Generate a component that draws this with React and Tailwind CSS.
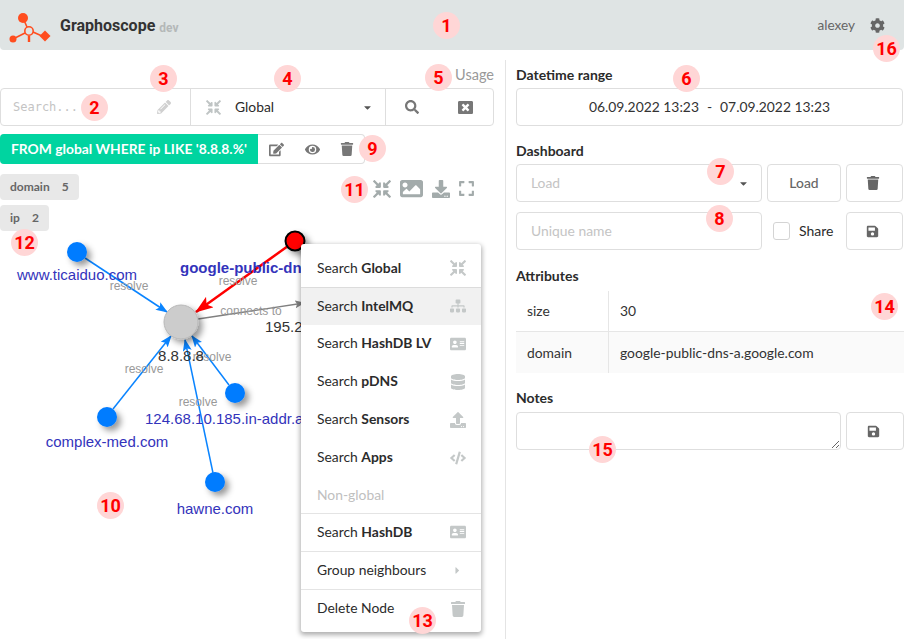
import React from "react";
import {
  FaAddressCard,
  FaCaretDown,
  FaCaretRight,
  FaCode,
  FaCog,
  FaCompressArrowsAlt,
  FaDatabase,
  FaDownload,
  FaEdit,
  FaExpand,
  FaEye,
  FaImage,
  FaPencilAlt,
  FaSave,
  FaSearch,
  FaSitemap,
  FaTrash,
  FaUpload,
  FaWindowClose,
} from "react-icons/fa";

const markers = [
  ["1", "left-[433px] top-[12px]"],
  ["2", "left-[81px] top-[94px]"],
  ["3", "left-[150px] top-[65px]"],
  ["4", "left-[274px] top-[65px]"],
  ["5", "left-[425px] top-[64px]"],
  ["6", "left-[673px] top-[65px]"],
  ["7", "left-[707px] top-[158px]"],
  ["8", "left-[706px] top-[205px]"],
  ["9", "left-[359px] top-[135px]"],
  ["10", "left-[97px] top-[492px]"],
  ["11", "left-[341px] top-[176px]"],
  ["12", "left-[11px] top-[229px]"],
  ["13", "left-[409px] top-[607px]"],
  ["14", "left-[871px] top-[293px]"],
  ["15", "left-[589px] top-[436px]"],
  ["16", "left-[873px] top-[35px]"],
];

const Marker = ({ label, pos }) => (
  <div
    className={`absolute ${pos} flex h-[27px] w-[27px] items-center justify-center rounded-full bg-[#ffd6d6] font-['Roboto',sans-serif] text-[18px] font-bold text-[#f00]`}
  >
    {label}
  </div>
);

const Logo = () => (
  <svg width="52" height="42" viewBox="0 0 52 42" className="shrink-0">
    <g stroke="#ff4d1f" fill="none">
      <path d="M23 14 L27 23 M13 35 L25 29 M33 28 L42 32" strokeWidth="1.6" />
      <path d="M29 32 L29 38" strokeWidth="2.4" />
      <circle cx="29" cy="27" r="4.2" strokeWidth="1.6" />
    </g>
    <circle cx="23" cy="14" r="5" fill="#ff4d1f" />
    <circle cx="13" cy="35" r="3.5" fill="#ff4d1f" />
    <path d="M45 26.5 L50.5 32 L45 37.5 L39.5 32 Z" fill="#ff4d1f" />
  </svg>
);

const Graph = () => (
  <svg width="505" height="503" viewBox="0 134 505 503" className="absolute left-0 top-0">
    <defs>
      <filter id="nodeShadow" x="-50%" y="-50%" width="220%" height="220%">
        <feDropShadow dx="4" dy="4" stdDeviation="3" floodColor="#000" floodOpacity="0.4" />
      </filter>
      <marker id="arrowBlue" viewBox="0 0 12 9" refX="11" refY="4.5" markerWidth="12" markerHeight="9" markerUnits="userSpaceOnUse" orient="auto">
        <path d="M0 0 L12 4.5 L0 9 L2.5 4.5 Z" fill="#0a84ff" />
      </marker>
      <marker id="arrowRed" viewBox="0 0 18 13" refX="17" refY="6.5" markerWidth="18" markerHeight="13" markerUnits="userSpaceOnUse" orient="auto">
        <path d="M0 0 L18 6.5 L0 13 L4 6.5 Z" fill="#f00" />
      </marker>
      <marker id="arrowGray" viewBox="0 0 10 8" refX="9" refY="4" markerWidth="10" markerHeight="8" markerUnits="userSpaceOnUse" orient="auto">
        <path d="M0 0 L10 4 L0 8 L2 4 Z" fill="#808080" />
      </marker>
    </defs>

    <g stroke="#0a84ff" strokeWidth="1.5" fill="none">
      <line x1="85" y1="258" x2="167" y2="312" markerEnd="url(#arrowBlue)" />
      <line x1="113" y1="409" x2="171" y2="336" markerEnd="url(#arrowBlue)" />
      <line x1="229" y1="385" x2="192" y2="336" markerEnd="url(#arrowBlue)" />
      <line x1="213" y1="473" x2="185" y2="340" markerEnd="url(#arrowBlue)" />
    </g>
    <line x1="288" y1="246" x2="196" y2="312" stroke="#f00" strokeWidth="2.5" markerEnd="url(#arrowRed)" />
    <line x1="198" y1="319" x2="304" y2="303" stroke="#808080" strokeWidth="1.3" markerEnd="url(#arrowGray)" />

    <g filter="url(#nodeShadow)">
      <circle cx="181" cy="322" r="17" fill="#ccc" stroke="#b8b8b8" />
      <circle cx="77" cy="252" r="10" fill="#007bff" />
      <circle cx="235" cy="393" r="10" fill="#007bff" />
      <circle cx="107" cy="417" r="10" fill="#007bff" />
      <circle cx="215" cy="482" r="10" fill="#007bff" />
      <circle cx="295" cy="241" r="9.5" fill="#f00" stroke="#000" strokeWidth="2" />
    </g>

    <g className="font-['Liberation_Sans',sans-serif]">
      <g fill="#999" fontSize="12" textAnchor="middle">
        <text x="129" y="290">resolve</text>
        <text x="238" y="285">resolve</text>
        <text x="144" y="373">resolve</text>
        <text x="212" y="361">resolve</text>
        <text x="198" y="406">resolve</text>
        <text x="251" y="315">connects to</text>
      </g>
      <g fill="#3333bb" fontSize="15" textAnchor="middle">
        <text x="77" y="280">www.ticaiduo.com</text>
        <text x="107" y="447">complex-med.com</text>
        <text x="215" y="514">hawne.com</text>
        <text x="145" y="424" textAnchor="start">124.68.10.185.in-addr.arpa</text>
        <text x="180" y="273" textAnchor="start" fontWeight="700">google-public-dns-a.google.com</text>
      </g>
      <g fill="#333" fontSize="15">
        <text x="181" y="361" textAnchor="middle">8.8.8.8</text>
        <text x="265" y="332">195.22.26.248</text>
      </g>
    </g>
  </svg>
);

const menuRows = [
  { pre: "Search ", bold: "Global", icon: FaCompressArrowsAlt, cls: "h-[44px] pt-[5px] border-b border-[#dcdcdc]" },
  { pre: "Search ", bold: "IntelMQ", icon: FaSitemap, cls: "h-[37px] pb-[1px] bg-[#f1f1f1]" },
  { pre: "Search ", bold: "HashDB LV", icon: FaAddressCard, cls: "h-[38px] pb-[1px]" },
  { pre: "Search ", bold: "pDNS", icon: FaDatabase, cls: "h-[38px] pb-[1px]" },
  { pre: "Search ", bold: "Sensors", icon: FaUpload, cls: "h-[38px] pb-[1px]" },
  { pre: "Search ", bold: "Apps", icon: FaCode, cls: "h-[38px] pb-[1px]" },
  { pre: "Non-global", disabled: true, cls: "h-[37px] border-b border-[#e4e4e4]" },
  { pre: "Search ", bold: "HashDB", icon: FaAddressCard, cls: "h-[38px] pb-[1px] border-b border-[#e4e4e4]" },
  { pre: "Group neighbours", icon: FaCaretRight, small: true, cls: "h-[38px] pb-[1px] border-b border-[#e4e4e4]" },
  { pre: "Delete Node", icon: FaTrash, cls: "h-[42px] pb-[5px]" },
];

const ContextMenu = () => (
  <div className="absolute left-[301px] top-[110px] w-[180px] rounded-[3px] bg-white shadow-[0_2px_5px_1px_rgba(0,0,0,0.32)]">
    {menuRows.map((row) => {
      const Icon = row.icon;
      return (
        <div key={row.pre + (row.bold || "")} className={`flex items-center justify-between pl-[16px] pr-[15px] ${row.cls}`}>
          <span className={row.disabled ? "text-[#c0c0c0]" : "text-[#2b2b2b]"}>
            {row.pre}
            {row.bold && <b className="font-bold">{row.bold}</b>}
          </span>
          {Icon && (
            <span className="flex w-[17px] justify-center text-[#c4c8c8]">
              <Icon size={row.small ? 11 : 16} />
            </span>
          )}
        </div>
      );
    })}
  </div>
);

const Chip = ({ name, count, className }) => (
  <div className={`flex h-[26px] items-center gap-[12px] rounded-[4px] bg-[#e8e8e8] pl-[10px] text-[12px] font-bold text-[#666] ${className}`}>
    <span>{name}</span>
    <span>{count}</span>
  </div>
);

const boxBtn = "flex h-[38px] items-center justify-center rounded-[4px] border border-[#dedede] bg-white text-[#666]";

const Label = ({ children, className = "" }) => (
  <div className={`text-[14px] font-bold leading-[18px] text-[#2b2b2b] ${className}`}>{children}</div>
);

export default function App() {
  return (
    <div className="relative h-[639px] w-[904px] overflow-hidden bg-white font-['Lato',sans-serif] text-[13.86px] text-[#2b2b2b]">
      <header className="flex h-[50px] items-center rounded-b-[4px] bg-[#dfe4e4] pr-[19px]">
        <Logo />
        <span className="ml-[8px] mt-[1px] font-['Roboto',sans-serif] text-[16px] font-bold text-[#333]">Graphoscope</span>
        <span className="ml-[4px] mt-[5px] font-['Roboto',sans-serif] text-[12px] font-bold text-[#b4b8b8]">dev</span>
        <span className="ml-auto text-[13.6px] text-[#666]">alexey</span>
        <FaCog size={15} className="ml-[15px] text-[#666]" />
      </header>

      <main className="flex h-[589px]">
        <section className="mt-[10px] flex w-[506px] shrink-0 flex-col border-r border-[#e4e4e4]">
          <div className="flex h-[28px] items-start justify-end pr-[11px] pt-[6px] text-[14.5px] leading-[18px] text-[#999]">Usage</div>
          <div className="mr-[11px] flex h-[38px] items-center rounded-[4px] border border-[#dedede]">
            <div className="flex h-full w-[190px] items-center border-r border-[#dedede] pl-[12px] pr-[19px]">
              <input placeholder="Search..." className="w-[120px] bg-transparent font-['DejaVu_Sans_Mono',monospace] text-[12px] outline-none placeholder:text-[#c4c4c4]" />
              <FaPencilAlt size={14} className="ml-auto text-[#d0d0d0]" />
            </div>
            <div className="flex h-full w-[195px] items-center border-r border-[#dedede] pl-[15px] pr-[12px]">
              <FaCompressArrowsAlt size={15} className="text-[#bfc4c4]" />
              <span className="ml-[14px] text-[#2b2b2b]">Global</span>
              <FaCaretDown size={11} className="ml-auto text-[#555]" />
            </div>
            <div className="flex flex-1 items-center justify-between pl-[19px] pr-[20px] text-[#777]">
              <FaSearch size={14} />
              <FaWindowClose size={15} />
            </div>
          </div>

          <div className="relative mt-[8px] flex-1">
            <Graph />
            <div className="relative flex h-[30px] w-[365px] items-center rounded-[4px] border-y border-r border-[#dedede]">
              <div className="-my-px flex h-[30px] w-[258px] items-center rounded-l-[4px] bg-[#00d4a0] pl-[11px] text-[13.85px] font-bold text-white">
                FROM global WHERE ip LIKE '8.8.8.%'
              </div>
              <div className="flex flex-1 items-center justify-between pl-[11px] pr-[10px] text-[#777]">
                <FaEdit size={15} />
                <FaEye size={15} />
                <FaTrash size={14} />
              </div>
            </div>
            <Chip name="domain" count="5" className="relative mt-[10px] w-[79px]" />
            <Chip name="ip" count="2" className="relative mt-[5px] w-[49px]" />
            <div className="absolute left-[373px] top-[43px] flex items-center text-[#a3abab]">
              <FaCompressArrowsAlt size={18} />
              <FaImage size={23} className="ml-[9px]" />
              <FaDownload size={18} className="ml-[9px]" />
              <FaExpand size={17} className="ml-[8px]" />
            </div>
            <ContextMenu />
          </div>
        </section>

        <section className="min-w-0 flex-1 pl-[10px] pt-[16px]">
          <Label>Datetime range</Label>
          <div className="mt-[4px] flex h-[38px] w-[387px] items-center justify-center gap-[8px] rounded-[4px] border border-[#dedede] text-[#333]">
            <span>06.09.2022 13:23</span>
            <span>-</span>
            <span>07.09.2022 13:23</span>
          </div>

          <Label className="mt-[16px]">Dashboard</Label>
          <div className="mt-[4px] flex gap-[5px]">
            <div className="flex h-[38px] w-[246px] items-center justify-between rounded-[4px] border border-[#dedede] pl-[14px] pr-[12px] text-[#c4c4c4]">
              <span>Load</span>
              <FaCaretDown size={11} className="text-[#555]" />
            </div>
            <button className={`${boxBtn} w-[74px] font-medium`}>Load</button>
            <button className={`${boxBtn} w-[57px] pr-[4px]`}>
              <FaTrash size={14} />
            </button>
          </div>
          <div className="mt-[10px] flex items-center">
            <input placeholder="Unique name" className="h-[38px] w-[246px] rounded-[4px] border border-[#dedede] pb-[2px] pl-[14px] outline-none placeholder:text-[#c4c4c4]" />
            <span className="ml-[11px] h-[18px] w-[17px] rounded-[3px] border border-[#d4d4d4]" />
            <span className="ml-[9px] pb-[1px] text-[14px] text-[#2b2b2b]">Share</span>
            <button className={`${boxBtn} ml-auto mr-[1px] w-[57px] pr-[4px]`}>
              <FaSave size={13} />
            </button>
          </div>

          <Label className="mt-[17px]">Attributes</Label>
          <div className="mt-[5px] w-[388px] text-[#333]">
            <div className="flex h-[42px] border-b border-[#e6e6e6] pt-[1px]">
              <div className="flex w-[93px] items-center border-r border-[#e6e6e6] pl-[11px]">size</div>
              <div className="flex items-center pl-[11px]">30</div>
            </div>
            <div className="flex h-[41px] bg-[#fafafa]">
              <div className="flex w-[93px] items-center border-r border-[#e6e6e6] pl-[11px] pt-[1px]">domain</div>
              <div className="flex items-center pl-[11px] pt-[1px]">google-public-dns-a.google.com</div>
            </div>
          </div>

          <Label className="mt-[16px]">Notes</Label>
          <div className="mt-[5px] flex gap-[5px]">
            <textarea className="h-[38px] w-[325px] rounded-[4px] border border-[#dedede] outline-none" />
            <button className={`${boxBtn} w-[58px] pr-[4px]`}>
              <FaSave size={13} />
            </button>
          </div>
        </section>
      </main>

      {markers.map(([label, pos]) => (
        <Marker key={label} label={label} pos={pos} />
      ))}
    </div>
  );
}
